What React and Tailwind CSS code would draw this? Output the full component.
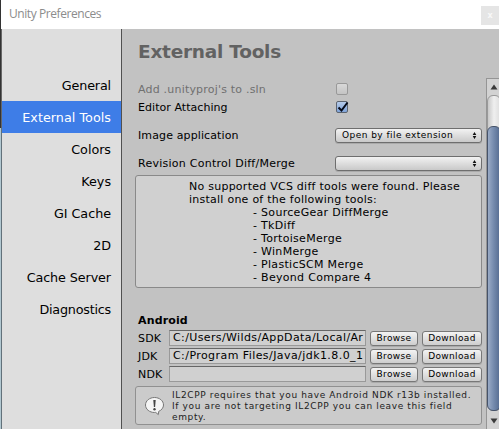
import React from 'react';

const sections = [
  ['General', 'tracking-[-0.15px]'],
  ['External Tools', 'tracking-[0.03px]'],
  ['Colors', 'tracking-[-0.03px]'],
  ['Keys', 'tracking-[-0.03px]'],
  ['GI Cache', 'tracking-[-0.03px]'],
  ['2D', 'tracking-[-0.1px]'],
  ['Cache Server', 'tracking-[-0.1px]'],
  ['Diagnostics', 'tracking-[-0.22px]'],
];

const tools = ['SourceGear DiffMerge', 'TkDiff', 'TortoiseMerge', 'WinMerge', 'PlasticSCM Merge', 'Beyond Compare 4'];

const paths = [
  ['SDK', 'C:/Users/Wilds/AppData/Local/Ar', 'tracking-[0.38px]'],
  ['JDK', 'C:/Program Files/Java/jdk1.8.0_1', 'tracking-[0.43px]'],
  ['NDK', '', ''],
];

function Popup({ children }) {
  return (
    <div className="flex h-[15px] w-[147px] items-center justify-between rounded-[3px] border border-[#6e6e6e] bg-linear-to-b from-[#f2f2f2] to-[#c9c9c9] pr-[4px] pl-[6px] text-[9px] tracking-[0.45px] shadow-[0_1px_0_#aaa]">
      <span>{children}</span>
      <svg width="5" height="7" viewBox="0 0 5 7">
        <path d="M2.5 0 4.3 3H.7ZM2.5 7 .7 4H4.3Z" fill="#111" />
      </svg>
    </div>
  );
}

function Button({ children, className }) {
  return (
    <div className={`flex h-[15px] items-center justify-center rounded-[3px] border border-[#777] bg-linear-to-b from-[#f3f3f3] to-[#cecece] text-[9px] shadow-[0_1px_0_#aaa] ${className}`}>
      {children}
    </div>
  );
}

function Scrollbar() {
  return (
    <div className="mt-[49px] flex h-[351px] w-[13px] shrink-0 flex-col overflow-hidden border-t border-l border-[#959595] bg-[#d2d2d2]">
      <div className="flex h-[16px] shrink-0 items-center justify-center pl-px">
        <svg width="8" height="6" viewBox="0 0 8 6"><path d="M4 .5 7.5 5.5H.5Z" fill="#3a3a3a" /></svg>
      </div>
      <div className="h-[316px] w-[14px] shrink-0 rounded-[6px] border border-[#999] bg-linear-to-r from-[#c9c9c9] via-[#efefef] to-[#dedede]">
        <div className="mt-[30px] -ml-px h-[285px] w-[14px] rounded-[6px] border border-[#46536a] bg-linear-to-r from-[#9aabc6] via-[#7389ac] to-[#566c90]" />
      </div>
      <div className="flex h-[18px] shrink-0 items-center justify-center pt-px pl-px">
        <svg width="8" height="6" viewBox="0 0 8 6"><path d="M4 5.5 .5 .5H7.5Z" fill="#3a3a3a" /></svg>
      </div>
    </div>
  );
}

export default function App() {
  return (
    <div className="flex h-[429px] w-[499px] flex-col overflow-hidden bg-[#c2c2c2] font-['DejaVu_Sans',sans-serif] text-[11px] leading-[13px] whitespace-nowrap text-black">
      <header className="flex h-[29px] shrink-0 border-l border-[#333] bg-white">
        <span className="mt-[7px] ml-[8px] font-['Open_Sans',sans-serif] text-[12px] leading-[14px] tracking-[-0.43px] text-[#8c8c8c]">Unity Preferences</span>
        <span className="mt-[6px] ml-auto flex h-[19px] w-[18px] items-center justify-center bg-[#e5e5e5] text-[8px] font-bold text-[#f8f8f8]">x</span>
      </header>
      <div className="flex h-[400px]">
        <div className="flex w-[2px] shrink-0 flex-col">
          <div className="h-[99px] border-r border-[#666] bg-[#333]" />
          <div className="flex-1 border-r border-[#62717a] bg-[#b2c8d1]" />
        </div>
        <nav className="w-[120px] shrink-0 border-r border-[#505050] bg-[#dedede] pt-[40px] text-[12.75px]">
          {sections.map(([name, spacing]) => (
            <div key={name} className={`flex h-[32px] items-center justify-end pr-[10px] ${spacing} ${name === 'External Tools' ? 'bg-[#3e7de7] text-white' : ''}`}>{name}</div>
          ))}
        </nav>
        <main className="w-[364px] shrink-0 pl-[13px]">
          <h1 className="h-[51px] pt-[11px] pl-[3px] text-[18.5px] leading-[24px] font-bold tracking-[-0.25px] text-[#626262]">External Tools</h1>
          <div className="flex h-[18px] items-center pl-[3px] text-[#707070]">
            <span className="w-[198px] tracking-[0.2px]">Add .unityproj's to .sln</span>
            <span className="h-[12px] w-[12px] rounded-[2px] border border-[#999] bg-linear-to-b from-[#d8d8d8] to-[#c4c4c4]" />
          </div>
          <div className="flex h-[18px] items-center pl-[3px]">
            <span className="w-[198px] tracking-[0.05px]">Editor Attaching</span>
            <span className="h-[12px] w-[12px] rounded-[2px] border border-[#5c6470] bg-linear-to-b from-[#b5cbea] to-[#7fa3d8]">
              <svg className="-mt-px" width="12" height="12" viewBox="0 0 12 12"><path d="M1.5 6.5 4.5 9.5 10.5 1.5" fill="none" stroke="#050a18" strokeWidth="2" /></svg>
            </span>
          </div>
          <div className="mt-[10px] flex h-[18px] items-center pl-[3px]">
            <span className="w-[197px] tracking-[0.12px]">Image application</span>
            <Popup>Open by file extension</Popup>
          </div>
          <div className="mt-[10px] flex h-[18px] items-center pl-[3px]">
            <span className="w-[197px] tracking-[0.26px]">Revision Control Diff/Merge</span>
            <Popup />
          </div>
          <div className="mt-[3px] h-[113px] w-[347px] rounded-[3px] border border-[#898989] bg-[#d0d0d0] pt-[4px] pl-[53px] tracking-[0.25px]">
            <div>No supported VCS diff tools were found. Please</div>
            <div>install one of the following tools:</div>
            <ul className="pl-[64px] tracking-[0.3px]">
              {tools.map((tool) => <li key={tool}>- {tool}</li>)}
            </ul>
          </div>
          <h2 className="mt-[25px] h-[16px] pl-[3px] leading-[15px] font-bold tracking-[0.15px]">Android</h2>
          {paths.map(([name, path, spacing]) => (
            <div key={name} className="flex h-[18px] items-center pl-[3px]">
              <span className="w-[31px] tracking-[0.2px]">{name}</span>
              <div className="h-[16px] w-[197px] border border-[#999] border-t-[#666] bg-[#d0d0d0] px-[3px]">
                <div className={`h-[14px] leading-[14px] ${spacing}`}>{path}</div>
              </div>
              <Button className="ml-[4px] w-[48px] tracking-[0.35px]">Browse</Button>
              <Button className="ml-[4px] w-[60px] tracking-[0.35px]">Download</Button>
            </div>
          ))}
          <div className="mt-[3px] flex h-[39px] w-[347px] items-center rounded-[3px] border border-[#909090] bg-[#cbcbcb] pt-px text-[9px] leading-[11px] text-[#222]">
            <svg className="ml-[8px] shrink-0" width="21" height="20" viewBox="0 0 21 20">
              <path d="M10.5 1.5C5.5 1.5 1.5 4.8 1.5 9s4 7.5 9 7.5l1.2-.1 2.6 2.2.4-3.2c2.8-1.2 4.8-3.6 4.8-6.4 0-4.2-4-7.5-9-7.5Z" fill="#f5f5f5" stroke="#777" />
              <path d="M9.3 4h2.4l-.6 7H9.9Z" fill="#444" /><circle cx="10.5" cy="13.2" r="1.2" fill="#444" />
            </svg>
            <div className="ml-[7px] tracking-[0.63px]">
              IL2CPP requires that you have Android NDK r13b installed.<br />
              If you are not targeting IL2CPP you can leave this field<br />
              empty.
            </div>
          </div>
        </main>
        <Scrollbar />
      </div>
    </div>
  );
}
